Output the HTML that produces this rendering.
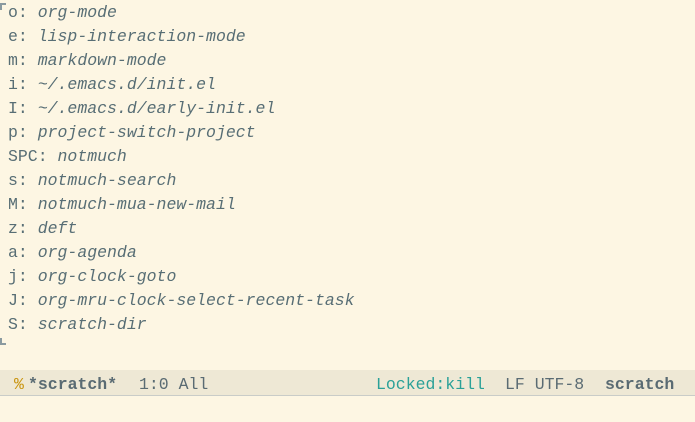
<!DOCTYPE html>
<html><head><style>
html,body{margin:0;padding:0;}
body{width:695px;height:422px;background:#fdf6e3;position:relative;overflow:hidden;font-family:"Liberation Mono",monospace;font-size:16.5px;color:#586e75;}
.l{position:absolute;left:8px;height:24px;line-height:24px;white-space:pre;}
.l i{font-style:italic;}
.f{position:absolute;left:0;width:6px;height:7px;border-left:2px solid #8a9aa0;box-sizing:border-box;}
.ml{position:absolute;left:0;top:370px;width:695px;height:25px;background:#eee8d5;border-bottom:1px solid #c9ccc8;line-height:29px;white-space:pre;color:#5a6b73;}
.ml span{position:absolute;top:0;}
</style></head><body>
<div class="f" style="top:3px;border-top:2px solid #8a9aa0;"></div>
<div class="f" style="top:338px;border-bottom:2px solid #8a9aa0;"></div>
<div class="l" style="top:1px">o: <i>org-mode</i></div>
<div class="l" style="top:25px">e: <i>lisp-interaction-mode</i></div>
<div class="l" style="top:49px">m: <i>markdown-mode</i></div>
<div class="l" style="top:73px">i: <i>~/.emacs.d/init.el</i></div>
<div class="l" style="top:97px">I: <i>~/.emacs.d/early-init.el</i></div>
<div class="l" style="top:121px">p: <i>project-switch-project</i></div>
<div class="l" style="top:145px">SPC: <i>notmuch</i></div>
<div class="l" style="top:169px">s: <i>notmuch-search</i></div>
<div class="l" style="top:193px">M: <i>notmuch-mua-new-mail</i></div>
<div class="l" style="top:217px">z: <i>deft</i></div>
<div class="l" style="top:241px">a: <i>org-agenda</i></div>
<div class="l" style="top:265px">j: <i>org-clock-goto</i></div>
<div class="l" style="top:289px">J: <i>org-mru-clock-select-recent-task</i></div>
<div class="l" style="top:313px">S: <i>scratch-dir</i></div>
<div class="ml">
<span style="left:14px;color:#c9940e;">%</span>
<span style="left:28px;font-weight:bold;">*scratch*</span>
<span style="left:139px;">1:0 All</span>
<span style="left:376px;color:#2aa198;">Locked:kill</span>
<span style="left:505px;">LF UTF-8</span>
<span style="left:605px;font-weight:bold;">scratch</span>
</div>
</body></html>
